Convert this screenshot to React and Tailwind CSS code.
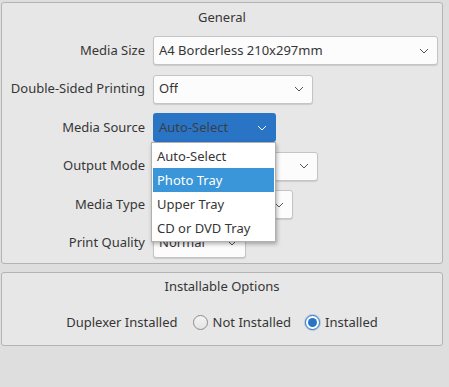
import React from 'react';

const Chevron = ({ color = '#555' }) => (
  <svg width="10" height="6" viewBox="0 0 10 6" className="shrink-0">
    <path d="M1 1 L5 5 L9 1" fill="none" stroke={color} strokeWidth="1" />
  </svg>
);

const Combo = ({ value, width }) => (
  <div
    className="h-[29px] flex items-center justify-between pl-[5px] pr-[8px] bg-[#fcfcfc] border border-[#c4c4c4] rounded-[3px] shadow-[0_1px_1px_rgba(0,0,0,0.12)]"
    style={{ width }}
  >
    <span className="whitespace-nowrap overflow-hidden">{value}</span>
    <Chevron />
  </div>
);

const Row = ({ label, children }) => (
  <div className="flex items-center h-[29px]">
    <div className="w-[143px] text-right whitespace-nowrap">{label}</div>
    <div className="ml-[8px] relative">{children}</div>
  </div>
);

const sources = ['Auto-Select', 'Photo Tray', 'Upper Tray', 'CD or DVD Tray'];

const Radio = ({ checked }) =>
  checked ? (
    <span className="w-[15px] h-[15px] rounded-full border border-[#2a74c6] bg-white flex items-center justify-center shadow-[0_0_0_1px_rgba(42,116,198,0.25)]">
      <span className="w-[9px] h-[9px] rounded-full bg-[#2a74c6]" />
    </span>
  ) : (
    <span className="w-[15px] h-[15px] rounded-full border border-[#8c8c8c] bg-gradient-to-b from-[#f4f4f4] to-[#e4e4e4]" />
  );

export default function App() {
  return (
    <div className="w-[449px] h-[387px] bg-[#dedede] font-['Noto_Sans',sans-serif] text-[13px] text-[#363636] pt-[2px] pl-[1px] overflow-hidden">
      {/* General */}
      <div className="w-[442px] h-[262px] bg-[#e7e7e7] border border-[#b4b4b4] rounded-[3px]">
        <div className="text-center leading-[18px] pt-[5px]">General</div>
        <div className="flex flex-col gap-[9.5px] mt-[10px]">
          <Row label="Media Size">
            <Combo value="A4 Borderless 210x297mm" width={285} />
          </Row>
          <Row label="Double-Sided Printing">
            <Combo value="Off" width={160} />
          </Row>
          <Row label="Media Source">
            <div className="w-[123px] h-[29px] flex items-center justify-between pl-[6px] pr-[9px] bg-[#2a74c6] rounded-[3px]">
              <span className="text-[#3a3f47]">Auto-Select</span>
              <Chevron color="#ffffff" />
            </div>
            <div className="absolute left-[-2px] top-[29px] z-10 w-[125px] bg-white border border-[#b0b0b0] py-[1px] shadow-[1px_2px_4px_rgba(0,0,0,0.3)]">
              {sources.map((s, i) => (
                <div
                  key={s}
                  className={`h-[24px] leading-[24px] px-[4px] mx-[1px] whitespace-nowrap ${
                    i === 1 ? 'bg-[#3a96d8] text-white' : ''
                  }`}
                >
                  {s}
                </div>
              ))}
            </div>
          </Row>
          <Row label="Output Mode">
            <Combo value="Normal" width={165} />
          </Row>
          <Row label="Media Type">
            <Combo value="Plain Paper" width={140} />
          </Row>
          <Row label="Print Quality">
            <Combo value="Normal" width={93} />
          </Row>
        </div>
      </div>

      {/* Installable Options */}
      <div className="w-[442px] h-[74px] mt-[8px] bg-[#e7e7e7] border border-[#b4b4b4] rounded-[3px]">
        <div className="text-center leading-[18px] pt-[4px]">Installable Options</div>
        <div className="flex items-center justify-center mt-[18px]">
          <span>Duplexer Installed</span>
          <span className="ml-[15px] flex items-center gap-[5px]">
            <Radio />
            <span>Not Installed</span>
          </span>
          <span className="ml-[14px] flex items-center gap-[5px]">
            <Radio checked />
            <span>Installed</span>
          </span>
        </div>
      </div>
    </div>
  );
}
